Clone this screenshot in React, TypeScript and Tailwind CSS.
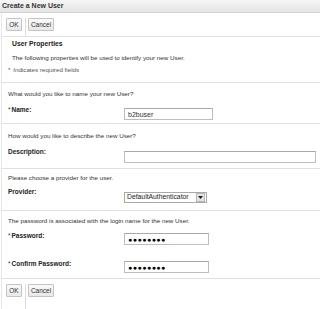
const FONT = { fontFamily: '"Liberation Sans", Arial, sans-serif' };

function Btn({ label, w }: { label: string; w: string }) {
  return (
    <button
      className={`${w} h-[13px] border border-[#c4c4c4] bg-gradient-to-b from-[#fafafa] to-[#e8e8e8] text-[6.5px] leading-[11px] text-[#333] rounded-[1px] flex items-center justify-center`}
    >
      {label}
    </button>
  );
}

function ButtonBar({ h, pt }: { h: string; pt: string }) {
  return (
    <div className={`${h} ${pt} pl-[4px] flex items-start`}>
      <Btn label="OK" w="w-[16px]" />
      <div className="w-px h-full bg-[#dcdcdc] ml-[3px]" />
      <div className="ml-[2px]">
        <Btn label="Cancel" w="w-[26px]" />
      </div>
    </div>
  );
}

function Label({ text, req }: { text: string; req?: boolean }) {
  return (
    <div className="w-[116px] shrink-0 text-[6.5px] leading-[8px] font-bold text-[#222]">
      {req && <span className="font-normal text-[#444] mr-[1px]">*</span>}
      {text}
    </div>
  );
}

function Input({ w, mt, value, dots }: { w: string; mt: string; value?: string; dots?: boolean }) {
  return (
    <div
      className={`${w} ${mt} h-[12px] border border-[#bdbdbd] border-t-[#a9a9a9] bg-white flex items-center pl-[3px] text-[#333]`}
    >
      {dots ? (
        <span className="text-[7px] leading-none tracking-[0.5px] text-black">●●●●●●●●</span>
      ) : (
        <span className="text-[7px] leading-none">{value}</span>
      )}
    </div>
  );
}

export default function App() {
  return (
    <div className="w-[320px] h-[309px] bg-white text-[#333] overflow-hidden" style={FONT}>
      <div className="h-[13px] bg-gradient-to-b from-[#f6f6f6] to-[#e4e4e4] border-b border-[#d2d2d2] pl-[2px] text-[7px] leading-[12px] font-bold text-[#333]">
        Create a New User
      </div>

      <div className="border-l border-[#e6e6e6] ml-px">
        <div className="border-b border-[#e0e0e0]">
          <ButtonBar h="h-[23px]" pt="pt-[5px]" />
        </div>

        <div className="h-[46px] flex flex-col border-b border-[#e0e0e0] pl-[10px]">
          <div className="leading-[14px] text-[6.8px] font-bold text-[#222]">User Properties</div>
          <div className="leading-[14px] text-[6.25px]">
            The following properties will be used to identify your new User.
          </div>
          <div className="leading-[10px] text-[6.25px] -ml-[4px] text-[#555]">
            <span className="mr-[1px]">*</span> Indicates required fields
          </div>
        </div>

        <div className="h-[41px] flex flex-col border-b border-[#e0e0e0] pl-[6px] pt-[5px]">
          <div className="leading-[12px] text-[6.25px]">What would you like to name your new User?</div>
          <div className="mt-[6px] flex items-start">
            <Label text="Name:" req />
            <Input w="w-[89px]" mt="mt-[2px]" value="b2buser" />
          </div>
        </div>

        <div className="h-[45px] flex flex-col border-b border-[#e0e0e0] pl-[6px] pt-[6px]">
          <div className="leading-[12px] text-[6.25px]">How would you like to describe the new User?</div>
          <div className="mt-[6px] flex items-start">
            <Label text="Description:" />
            <Input w="w-[192px]" mt="mt-[3px]" />
          </div>
        </div>

        <div className="h-[42px] flex flex-col border-b border-[#e0e0e0] pl-[6px] pt-[3px]">
          <div className="leading-[12px] text-[6.25px]">Please choose a provider for the user.</div>
          <div className="mt-[4px] flex items-start">
            <Label text="Provider:" />
            <div className="w-[83px] mt-[4px] h-[11px] border border-[#a9a9a9] bg-white flex items-center">
              <span className="flex-1 pl-[2px] text-[6.8px] leading-none text-[#222] whitespace-nowrap overflow-hidden">
                DefaultAuthenticator
              </span>
              <div className="w-[9px] h-[9px] mr-px bg-[#e4e4e4] border border-[#b8b8b8] flex items-center justify-center">
                <svg width="5" height="3" viewBox="0 0 5 3">
                  <path d="M0 0 L5 0 L2.5 3 Z" fill="#222" />
                </svg>
              </div>
            </div>
          </div>
        </div>

        <div className="h-[68px] flex flex-col border-b border-[#e0e0e0] pl-[6px] pt-[4px]">
          <div className="leading-[12px] text-[6.25px]">
            The password is associated with the login name for the new User.
          </div>
          <div className="mt-[5px] flex items-start">
            <Label text="Password:" req />
            <Input w="w-[85px]" mt="mt-[1px]" dots />
          </div>
          <div className="mt-[15px] flex items-start">
            <Label text="Confirm Password:" req />
            <Input w="w-[85px]" mt="mt-[1px]" dots />
          </div>
        </div>

        <ButtonBar h="h-[30px]" pt="pt-[5px]" />
      </div>
    </div>
  );
}
